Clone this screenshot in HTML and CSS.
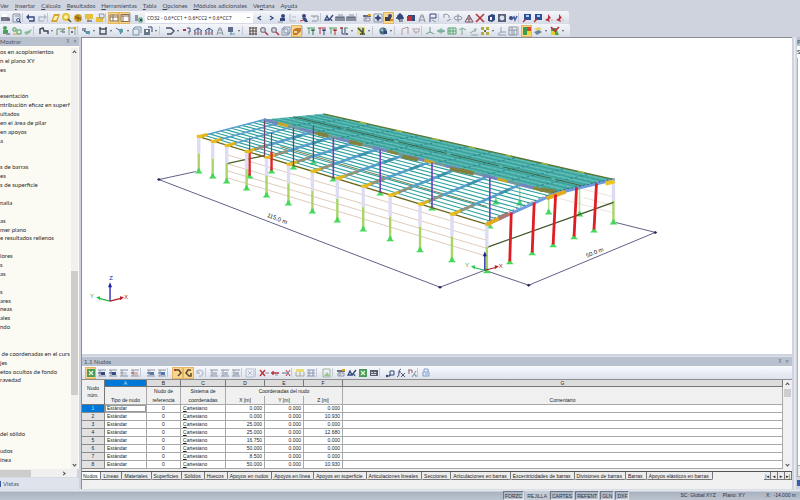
FILE: index.html
```html
<!DOCTYPE html>
<html lang="es">
<head>
<meta charset="utf-8">
<title>1.1 Nudos</title>
<link rel="stylesheet" href="styles.css">
</head>
<body>
<nav class="menu">
  <a href="#">Ver</a><a href="#"><u>I</u>nsertar</a><a href="#"><u>C</u>álculo</a><a href="#"><u>R</u>esultados</a><a href="#"><u>H</u>erramientas</a><a href="#"><u>T</u>abla</a><a href="#"><u>O</u>pciones</a><a href="#"><u>M</u>ódulos adicionales</a><a href="#">Ve<u>n</u>tana</a><a href="#">Ay<u>u</u>da</a>
</nav>
<div class="bars">
  <div class="toolbar">
    <div class="tools" data-icons="print preview | undo redo | note zoom ball bubble folder | *table *window | steps"></div>
    <select class="case" aria-label="Caso de carga"><option>CO32 - 0.6*CC1 + 0.6*CC2 + 0.6*CC7</option></select>
    <div class="tools" data-icons="prev next person axes2 person2 beam2 | glasses ruler ruler || sheet grid *cam gear redcube tower flag | rotate orbit tent cross cube frame birds | screen screen pin pin"></div>
  </div>
  <div class="toolbar">
    <div class="tools" data-icons="greenman boxes leaf || frame2 v beamg dots | member v cell v link v box3 disk v || shape v hook house house tower screen2 v || hash zoomr zoomr wire *solid | ax ay az axyz v check v || globe v || portal load | node surf mesh fork slope four v tri table2 | *color layers v heat v"></div>
  </div>
</div>
<main class="main">
  <aside class="side">
    <header class="caption"><span>Mostrar</span><span class="ctl">⊼ ✕</span></header>
    <div class="side-body">
      <ul class="tree" id="tree"></ul>
      <div class="vscroll"><i class="chev up"></i><span class="thumb"></span><i class="chev down"></i></div>
    </div>
    <div class="hscroll"><span class="thumb"></span><i class="chev right"></i></div>
    <a class="views" href="#"><i class="mark"></i>Vistas</a>
  </aside>
  <section class="center">
    <div class="view"><svg id="model" viewBox="82 38 710 317" role="img" aria-label="Modelo"></svg></div>
    <section class="sheet">
      <header class="caption"><span>1.1 Nudos</span><span class="ctl">⊼ ✕</span></header>
      <div class="tools sheet-tools" data-icons="*excel rowin rowmid rowoff rowred || colin colout || *curl *curl2 refresh | rowg rowg colg | xg | delx delm delr | hdr lines || pic | sheet glasses excel cal || steps2 fx perc | lock"></div>
      <div class="grid-wrap">
        <table class="grid">
          <colgroup><col class="c0"><col class="ca"><col class="cb"><col class="cc"><col class="cd"><col class="cd"><col class="cd"><col></colgroup>
          <thead>
            <tr class="letters"><th rowspan="3" class="num">Nudo<br>núm.</th><th class="on">A</th><th>B</th><th>C</th><th>D</th><th>E</th><th>F</th><th>G</th></tr>
            <tr class="h1"><th></th><th>Nudo de</th><th>Sistema de</th><th colspan="3">Coordenadas del nudo</th><th></th></tr>
            <tr class="h2"><th>Tipo de nudo</th><th>referencia</th><th>coordenadas</th><th>X [m]</th><th>Y [m]</th><th>Z [m]</th><th>Comentario</th></tr>
          </thead>
          <tbody id="rows"></tbody>
        </table>
        <div class="vscroll table-scroll"><i class="chev up"></i><span class="thumb"></span><i class="chev down"></i></div>
      </div>
      <div class="tabs">
        <button class="active">Nudos</button><button>Líneas</button><button>Materiales</button><button>Superficies</button><button>Sólidos</button><button>Huecos</button><button>Apoyos en nudos</button><button>Apoyos en línea</button><button>Apoyos en superficie</button><button>Articulaciones lineales</button><button>Secciones</button><button>Articulaciones en barras</button><button>Excentricidades de barras</button><button>Divisiones de barras</button><button>Barras</button><button>Apoyos elásticos en barras</button>
        <span class="pager"><button aria-label="Primera">|◂</button><button aria-label="Anterior">◂</button><button aria-label="Siguiente">▸</button><button aria-label="Última">▸|</button></span>
      </div>
    </section>
  </section>
  <aside class="right"><header class="caption">P</header><div class="right-top">S</div><div class="right-body"></div><div class="right-foot"></div><i class="mark"></i></aside>
</main>
<footer class="status">
  <button>FORZC</button><button class="flat">REJILLA</button><button>CARTES</button><button>REFENT</button><button>GLN</button><button>DXF</button>
  <span class="sc">SC: Global XYZ</span><span class="plane">Plano: XY</span><span class="coord">X:&nbsp; -14.000 m</span>
</footer>
<script src="script.js"></script>
</body>
</html>
```
FILE: styles.css
```css
* { box-sizing: border-box; }
body {
  margin: 0; height: 100vh; display: flex; flex-direction: column; overflow: hidden;
  background: #cfd3dd; color: #222; font: 6px/8px Lato, sans-serif;
}
button, select { font: inherit; color: inherit; border: 0; padding: 0; margin: 0; background: none; }
a { color: inherit; text-decoration: none; }
.menu { display: flex; gap: 6px; height: 11px; line-height: 11px; color: #444a58; }
.toolbar { display: flex; width: max-content; height: 13px; align-items: center; padding: 0 4px 0 0; background: linear-gradient(#f4f6fa, #e4e8f0 60%, #d6dbe6); border-radius: 0 2px 2px 0; }
.tools { display: flex; align-items: center; }
.tool { width: 11px; height: 12px; display: flex; align-items: center; justify-content: center; flex: none; }
.tool svg { width: 10px; height: 10px; display: block; }
.tool.lit { background: #fbd58c; box-shadow: inset 0 0 0 1px #e3b665; }
.sep { width: 3px; height: 9px; border-left: 1px solid #c3c8d4; flex: none; }
.sep.wide { width: 5px; margin-left: 0; }
.drop { width: 6px; display: flex; justify-content: center; }
.drop::after { content: ""; border: 1px solid transparent; border-top: 2px solid #555b6b; border-bottom: 0; }
.case { width: 108px; height: 10px; margin: 0 1px; padding-left: 2px; background: #fff; font: 5px/8px "Noto Sans", sans-serif; appearance: none; color: #222;
  background-image: linear-gradient(#8a93a8, #8a93a8); background-size: 3px 1px; background-repeat: no-repeat; background-position: 102px 4px; }
.main { flex: 1; min-height: 0; display: flex; }
.caption { height: 9px; line-height: 9px; display: flex; justify-content: space-between; background: #b9c0ce; color: #4b5363; flex: none; }
.ctl { padding-right: 2px; color: #6c7484; font-size: 5px; word-spacing: 2px; }

.side { width: 79px; flex: none; display: flex; flex-direction: column; }
.side-body { flex: 1; min-height: 0; display: flex; background: #fbfaf3; padding-top: 2px; }
.tree { list-style: none; margin: 0; padding: 0 0 4px; flex: 1; min-width: 0; display: flex; flex-direction: column; overflow: hidden; white-space: nowrap; color: #2b2b2b; }
.tree li { flex: 1; }
.vscroll { width: 8px; flex: none; margin-right: 2px; background: #f0f0f0; display: flex; flex-direction: column; align-items: center; }
.side .vscroll { width: 7px; margin-right: 1px; }
.vscroll .thumb { width: 7px; background: #cdcdcd; }
.side .vscroll .thumb { height: 124px; margin: 217px 0 auto; }
.chev { width: 3px; height: 3px; border: solid #444; border-width: 1px 0 0 1px; flex: none; }
.up { transform: rotate(45deg); margin-top: 3px; }
.down { transform: rotate(225deg); margin-bottom: 3px; }
.right.chev { transform: rotate(135deg); }
.hscroll { height: 9px; background: #f0f0f0; display: flex; align-items: center; justify-content: space-between; padding-right: 12px; margin-right: 2px; border-bottom: 1px solid #d8dbe2; }
.hscroll .thumb { width: 31px; height: 7px; background: #cdcdcd; }
.views { height: 11px; line-height: 11px; display: flex; gap: 2px; align-items: center; color: #4b5363; background: #dfe3ec; }
.mark { width: 1px; height: 6px; background: #3a5ba8; flex: none; }

.center { flex: 1; min-width: 0; margin-left: 2px; display: flex; flex-direction: column; border-left: 1px solid #888d98; }
.view { flex: 1; min-height: 0; background: #fff; border-top: 1px solid #888d98; display: flex; }
.view svg { flex: 1; min-width: 0; width: 100%; height: 100%; }
.sheet { margin-top: 2px; background: #f0f0f0; border-top: 1px solid #dde1e9; font: 5px/8px "Liberation Sans", sans-serif; }
.sheet .caption { padding-left: 2px; font: 6px/9px Lato, sans-serif; border-right: 1px solid #b9c0ce; }
.sheet-tools { height: 13px; padding-left: 3px; background: linear-gradient(#f8fafd, #dde2ec); }
.grid-wrap { display: flex; border-top: 1px solid #8e8e8e; }
.grid { flex: 1; min-width: 0; border-collapse: separate; border-spacing: 0; table-layout: fixed; font-size: 5px; line-height: 7px; color: #222; }
.c0 { width: 23px; } .ca { width: 42px; } .cb { width: 34px; } .cc { width: 45px; } .cd { width: 39px; }
.grid th, .grid td { padding: 0 2px; height: 8px; border: solid #a9a9a9; border-width: 0 1px 1px 0; font-weight: normal; white-space: nowrap; overflow: hidden; }
.grid .letters th { height: 7px; line-height: 6px; background: #dcdcdc; border-color: #777; }
.grid .letters .on, .grid .on { background: #0078d7; color: #bfe0ff; }
.grid .h1 th { height: 9px; border-bottom: 0; background: #f0f0f0; }
.grid .h2 th { height: 9px; background: #f0f0f0; }
.grid .letters .num { background: #f0f0f0; line-height: 7px; }
.grid tbody th { background: #e2e2e2; border-color: #8a8a8a; }
.grid tbody .on { background: #0078d7; }
.grid tbody td { background: #fff; }
.grid .mid { text-align: center; }
.grid .val { text-align: right; }
.grid .cur { box-shadow: inset 0 0 0 1px #999; }
.table-scroll { margin: 0 1px 0 0; }
.table-scroll .thumb { height: 8px; margin: 3px 0 auto; }
.tabs { margin-top: 2px; height: 18px; display: flex; align-items: flex-start; border-top: 1px solid #555; color: #222; }
.tabs button { height: 8px; line-height: 8px; padding: 0 3px 0 2px; border: solid #777; border-width: 0 1px 1px 0; border-radius: 0 0 2px 1px; background: #ececec; white-space: nowrap; }
.tabs .active { background: #fff; padding-left: 1px; }
.pager { margin-left: auto; display: flex; }
.pager button { width: 7px; padding: 0; font-family: "DejaVu Sans", sans-serif; border-radius: 0; }

.right:not(.chev) { width: 8px; padding-left: 3px; margin-left: 2px; margin-right: -2px; flex: none; display: flex; flex-direction: column; overflow: hidden; background: linear-gradient(90deg, #e9ecf2 1px, #cfd3dd 2px); }
.right-top { height: 12px; line-height: 12px; background: #f7f8fa; }
.right-body { flex: 1; background: #fff; border-left: 1px solid #aeb3be; }
.right-foot { height: 12px; background: #ececec; border: 1px solid #aaa; }
.right .mark { width: 4px; margin: 3px 0; }
.status { height: 11px; flex: none; display: flex; align-items: center; gap: 1px; padding: 0 4px 0 503px; background: linear-gradient(#e4e8ee 1px, #a9b2c0 2px, #bcc4d0); color: #2c3340; font: 5px/8px "Liberation Sans", sans-serif; white-space: nowrap; border-top: 1px solid #d9dde5; }
.status button { height: 9px; padding: 0 1px; border: 1px solid; border-color: #6f7888 #e3e7ed #e3e7ed #6f7888; }
.status .flat { border-color: transparent; background: #c6ccd6; }
.sc { margin-left: auto; }
.plane { margin: 0 20px 0 6px; }
```
FILE: script.js
```js
// Tool icons on a 10 x 10 grid: F fills a path, L strokes one.
const F = (c, d) => `<path fill="${c}" d="${d}"/>`;
const L = (c, d, w = 1) => `<path fill="none" stroke="${c}" stroke-width="${w}" d="${d}"/>`;
const C = (c, x, y, r) => `<circle cx="${x}" cy="${y}" r="${r}" fill="${c}"/>`;
const navy = '#34477c', gray = '#8c94a3', red = '#b8323c', green = '#49a25c', gold = '#d8a62c', teal = '#5a9aa8', pale = '#b4bccb';
const axis = (a, b) => L(a, 'M1 2H9M3 2V8') + L(b, 'M5 4H9M7 4V9') + F(b, 'M5 5l2-2 2 2z');
const row = (c, d) => L(gray, 'M1 2H9M1 8H9M3 2V8') + F(c, 'M4 4h4v3h-4z') + L(d, 'M1 5H4');
const house = c => L(navy, 'M1 5l4-3 4 3M2 5V9M8 5V9M5 3V9') + L(c, 'M1 7H9');
const icons = {
  print: F('#707a8e', 'M0 4h7l2 1v3H0z') + F('#fff', 'M1 1h5v3H1z') + F(red, 'M6 6h2v1H6z'),
  preview: F('#dfe5f2', 'M1 1h7v8H1z') + L(gray, 'M1 1h7v8H1zM3 3h4') + L(navy, 'M6 5.500a1.500 1.500 0 1 0 .1 0M7 8l2 2'),
  undo: L(navy, 'M3 8h5V4H2', 1.4) + F(navy, 'M0 4l3-3v6z'),
  redo: L(pale, 'M7 8H2V4h6', 1.4) + F(pale, 'M10 4L7 1v6z'),
  note: F(gold, 'M3 1h6L6 9H0z') + F('#fff5b8', 'M4 3h3L5 7H2z'),
  zoom: C('#e6c23c', 4, 4, 4) + C('#fff3a5', 4, 4, 2) + L('#6b5518', 'M6 6l3 3', 1.5),
  ball: C(gold, 5, 5, 4) + L('#7f5c16', 'M2 5h6M5 2v6M2 3l6 4'),
  bubble: F('#e4c138', 'M1 1h8v5H6L4 9 3 6H1z') + L(navy, 'M3 8h5'),
  folder: F('#e4c138', 'M1 4h7v5H1z') + L(gray, 'M4 1h5v4H5z'),
  table: F('#fff', 'M1 2h8v6H1z') + L('#856f50', 'M1 2h8v6H1zM4 2v6M1 4h8', 1),
  window: F('#fff', 'M1 1h8v8H1z') + L('#856f50', 'M1 1.500h8v7H1zM1 3h8M3 3v5'),
  steps: F(gray, 'M1 2h3v6H1z') + L(green, 'M5 5h3v4H5z') + C(navy, 7, 7, 1.3),
  steps2: L(navy, 'M1 8h4V3h4v4H4', 1) + C(navy, 2, 8, 1.2),
  prev: L(navy, 'M6 3L3 5l3 2', 1.3), next: L(navy, 'M4 3l3 2-3 2', 1.3),
  person: C(navy, 6, 3, 2) + F(navy, 'M3 5h5v3H3z') + L(gray, 'M1 9h5'),
  person2: C(navy, 5, 3, 2) + F(navy, 'M3 5h4l2 4H6z') + L(red, 'M1 8l4-1'),
  axes2: L(pale, 'M2 1v7h6M4 4h4'), beam2: L(gray, 'M1 3h7v5M2 8h5M4 3v2'),
  glasses: L(navy, 'M1 7l2-4 2 4zM5 7l4-5M6 5l2 3', 1.3),
  ruler: L('#4a5365', 'M1 8V4h8v4M3 4v4M5 4v4M7 4v4', 1.2) + L(gray, 'M3 2h5'),
  sheet: F('#6a6f77', 'M1 2h8v2H1z') + L(gray, 'M2 5h6v3H2zM4 4v4') + F(gold, 'M6 1h3v2H6z'),
  grid: L(gray, 'M1 1h8v8H1z') + L(navy, 'M5 2v6M2 5h6', 1.5) + C(navy, 5, 5, 2),
  cam: F('#3c3f4c', 'M1 4h6v4H1z') + C(navy, 6, 3, 2) + F('#c88925', 'M6 6h3v2H6z'),
  gear: C(navy, 5, 4, 3) + L(navy, 'M5 0v9M1 5h8', 1.3) + F(gray, 'M5 6h3v3H5z'),
  redcube: F(navy, 'M2 2h7v6H2z') + F(red, 'M1 3h5v5H1z'),
  tower: L(gray, 'M2 9l2-7h2l2 7M2 7h6M3 4h4'), flag: L(navy, 'M2 9V1h6v4H3') + L(gray, 'M4 7l4 2'),
  rotate: L(gray, 'M2 2a3 3 0 0 1 5 3M2 1v4M5 8l4-2'), orbit: L(gray, 'M5 1v8M1 5a4 2 0 1 0 8 0a4 2 0 1 0-8 0'),
  tent: L('#7e5360', 'M1 9l4-7 4 7zM5 2v7M3 6h4'), cross: L(red, 'M1 1l8 8M9 1L1 9', 1.6),
  cube: F(navy, 'M2 3l4-2 3 1v5L6 9 2 8z') + F('#fff', 'M4 4h2v3H4z'),
  frame: F('#59627a', 'M1 1h8v8H1z') + C('#dbe1ee', 5, 5, 2.4), birds: C(navy, 3, 5, 2) + L('#4861a6', 'M3 7l3-3 1 3 2-4', 1.6),
  screen: F('#28509c', 'M2 1h7v6H2z') + F('#b6cdf0', 'M4 2h3v2H4z') + L(red, 'M1 9l3-3', 1.5),
  pin: F(red, 'M4 1l3 4-2 1 1 3-5-2 3-2z') + L('#e0a0a4', 'M7 7h2'),
  greenman: C(green, 4, 2, 2) + F(green, 'M2 4h5v4H2z') + F(gray, 'M5 7h4v2H5z'),
  boxes: L(green, 'M1 2h3v3H1zM5 4h4v4H5z') + L(gold, 'M1 8h4'), leaf: F('#88bd9b', 'M1 6l4-1 4-2-2 4-4 2z'),
  frame2: L('#3d4656', 'M1 8V3l3-1 1 3h4v3', 1.4), beamg: L('#6f8b6d', 'M1 9V3h8L4 6') + L(navy, 'M6 6h3'),
  dots: L('#8aa37e', 'M2 9V2h6v7') + C(gold, 2, 2, 1.2) + C(gold, 8, 2, 1.2) + C(navy, 5, 6, 1),
  member: F(gray, 'M1 2h4v3H1z') + L(navy, 'M3 5l5 3') + F(teal, 'M5 5h4v3H5z'), cell: L('#4a5260', 'M2 3h6v5H2zM1 2h2M7 2h2', 1.4),
  link: L('#4668a0', 'M1 2l3 2 3-1v3L5 8') + C(teal, 6, 5, 2), box3: L('#7892a7', 'M1 3h6v6H1zM3 1h6v6M1 3l2-2'),
  disk: F('#6b7689', 'M1 3h6v6H1z') + L(navy, 'M5 1h4v5') + F('#fff', 'M3 4h2v2H3z'),
  shape: L('#48536c', 'M1 2h5l3 3-3 3H2', 1.4), hook: L(navy, 'M5 2h3v4H6') + F(red, 'M1 3h3v2H1z') + L(gray, 'M7 6v3'),
  house: house('#c28387'), screen2: F('#5d6c86', 'M2 1h5v5H2z') + L(teal, 'M4 8h5M5 6v3'),
  hash: L('#57463e', 'M1 2h8M1 5h8M1 8h8M2 1v8M5 1v8M8 1v8'), zoomr: C('#7c8193', 4, 4, 3) + C('#e1d5dc', 4, 4, 1.7) + L(red, 'M6 6l3 3', 1.5),
  wire: L('#8c95a9', 'M1 3h6v6H1zM3 1h6v6H3zM1 3l2-2M7 9l2-2'), solid: F('#c3792a', 'M1 4l3-2h5v3L5 9H1z') + F('#f3d09b', 'M2 5h3v2H2z'),
  ax: axis(green, '#3d6c52'), ay: axis(red, navy), az: axis(green, red), axyz: L(red, 'M1 2h3M7 8h2', 1.4) + L(navy, 'M3 2v6h5M6 2v5') + L(green, 'M5 2h4'),
  check: F('#dedc8c', 'M1 1h8v8H1z') + L('#3e4b3a', 'M2 2l5 5M7 2v5M4 8h5', 1.5),
  globe: C('#456b7d', 5, 5, 3.600) + C('#8fbec4', 4, 4, 1.5) + F(navy, 'M6 5h3v3H6z'), portal: L('#b49aa3', 'M2 9V3l6-2v7'), load: L('#b3a5ad', 'M1 3h8M3 3v3h5V3M5 6v2'),
  node: L('#6aa07f', 'M5 1v5M1 8l4-2 4 2'), surf: F('#93c7a2', 'M1 5l4-3 4 3-4 3z') + L('#6f95a5', 'M1 5h8'),
  mesh: L('#58a36e', 'M1 2h8v6H1zM3 2v6M6 2v6M1 5h8'), fork: L('#70aa80', 'M4 9V3M1 4l3-2 4 2'), slope: L('#8fa99d', 'M1 7l7-4M2 9h7M6 2v4'),
  four: F('#b2ad3e', 'M1 1h3v3H1zM6 1h3v3H6zM1 6h3v3H1zM6 6h3v3H6z') + L('#6a733e', 'M4 4l2 2M6 4L4 6'),
  tri: L('#90a0b8', 'M4 1v5h5M1 9h8M4 6L1 8'), table2: L(gray, 'M1 1h8v8H1zM1 4h8M4 1v8M6 4v5'),
  color: F('#3c9b50', 'M1 1h4v8H1z') + F('#d94432', 'M5 1h4v4H5z') + F('#e9d838', 'M5 5h4v4H5z'),
  layers: F('#e2d56e', 'M1 3l5-2 3 2-5 2z') + F('#6a86a2', 'M1 6l5-2 3 2-5 3z'),
  heat: F('#4aa54f', 'M1 2h5l3 7H1z') + F('#e3d22e', 'M1 5h4v4H1z') + L(red, 'M1 1l4 4 4-4', 1.7),
  excel: F('#4b9a58', 'M1 1h8v8H1z') + L('#e8f5df', 'M3 3l4 4M7 3L3 7', 1.2),
  rowin: row(navy, navy), rowmid: row('#334f85', '#334f85'), rowoff: row('#c9cfdb', gray), rowred: row('#d8b3b6', red),
  colin: row('#5277b0', navy), colout: row('#5277b0', '#5277b0'),
  curl: L('#5a4b2f', 'M2 2h4l2 3-3 3', 1.5) + F(red, 'M1 1h2v2H1z'), curl2: L('#5a4b2f', 'M7 2H4L2 5l3 3h2V5', 1.5),
  refresh: L(pale, 'M2 5a3 3 0 1 1 2 3M2 2v3h3', 1.3), rowg: row(pale, pale), colg: row('#a9b3c5', pale), xg: L(pale, 'M1 1h8v8H1zM3 3l4 4M7 3L3 7'),
  delx: L(red, 'M1 2l5 6M6 2L1 8', 1.4) + L(gray, 'M6 5h4'), delm: L(red, 'M1 5h8M3 3v4', 1.4) + L(gray, 'M5 7h3'), delr: L(red, 'M5 2l4 6M9 2L5 8', 1) + L(gray, 'M1 5h7', 1.4),
  hdr: F('#e9dc72', 'M1 1h8v3H1z') + L('#a8a99a', 'M1 4v4h8V4M5 4v4'), lines: L('#8a94b0', 'M1 2h8M1 5h8M1 8h8M3 2v6M7 2v6'),
  pic: L('#9fb09a', 'M1 1h7v8H1z') + F('#9cc38b', 'M2 8l3-4 3 4z'), cal: F('#59616e', 'M1 2h8v6H1z') + F('#d7dbe2', 'M2 4h2v1H2zM5 4h2v1H5zM2 6h5v1H2z'),
  fx: L('#4e5b77', 'M5 1q-2 0-2 4T1 9M2 4h3M5 5l4 4M9 5L5 9'), perc: L('#98606f', 'M1 2h4v3M2 2v4') + L('#7e8ba8', 'M9 3L5 9M7 7h2v2'),
  lock: L('#7f9fd0', 'M3 4V1h4v3M2 4h6v4H2zM4 6h3'),
};
document.querySelectorAll('.tools').forEach(box => {
  box.innerHTML = box.dataset.icons.split(' ').map(name => {
    if (name === '|') return '<i class="sep"></i>';
    if (name === '||') return '<i class="sep wide"></i>';
    if (name === 'v') return '<i class="drop"></i>';
    const lit = name[0] === '*', key = lit ? name.slice(1) : name;
    return `<button class="tool${lit ? ' lit' : ''}" aria-label="${key}"><svg viewBox="0 0 10 10">${icons[key]}</svg></button>`;
  }).join('');
});

document.getElementById('tree').innerHTML = ('os en acoplamientos/n el plano XY/es///esentación/ntribución eficaz en superf/ultados/en el área de pilar/en apoyos/a///s de barras/es/s de superficie//nalla//as/mer plano/e resultados rellenos//lores/s/as//s/ares/neas/ales/ndo///' +
  '&nbsp;de coordenadas en el curs/jes/etos ocultos de fondo/ravedad//////del sólido//udos/ínea').split('/').map(t => `<li>${t}</li>`).join('');

const nodes = [['0.000', '0.000'], ['0.000', '10.930'], ['25.000', '0.000'], ['25.000', '12.680'], ['16.750', '0.000'], ['50.000', '0.000'], ['8.500', '0.000'], ['50.000', '10.930']];
document.getElementById('rows').innerHTML = nodes.map(([x, z], i) =>
  `<tr><th class="${i ? '' : 'on'}">${i + 1}</th><td class="${i ? '' : 'cur'}">Estándar</td><td class="mid">0</td><td><u>C</u>artesiano</td><td class="val">${x}</td><td class="val">0.000</td><td class="val">${z}</td><td></td></tr>`).join('');

// Model of the hall: near eave, ridge and far eave run from left to right.
const mix = (a, b, t) => [a[0] + (b[0] - a[0]) * t, a[1] + (b[1] - a[1]) * t];
const near = [[198, 137], [487, 225]], ridge = [[263, 120], [556, 194]], far = [[323, 114], [615, 180]];
const out = [];
const line = (a, b, c, w = 1, extra = '') => out.push(`<line x1="${a[0]}" y1="${a[1]}" x2="${b[0]}" y2="${b[1]}" stroke="${c}" stroke-width="${w}" ${extra}/>`);
const poly = (p, c, o = 1) => out.push(`<polygon points="${p.join(' ')}" fill="${c}" opacity="${o}"/>`);
const foot = (x, y) => poly([[x - 1, y - 4], [x + 1, y - 4], [x + 2, y - 1], [x + 4, y + 1], [x - 4, y + 1], [x - 2, y - 1]], '#45d95a');
const label = (x, y, t, c, r = 0, s = 6) => out.push(`<text x="${x}" y="${y}" fill="${c}" font-size="${s}" font-family="Liberation Sans, sans-serif" text-anchor="middle" transform="rotate(${r} ${x} ${y})">${t}</text>`);
const column = (x, top, base, w = 3.4) => {
  const m = top + (base - top) * 0.47;
  line([x, top], [x, m], '#dcdcf4', w); line([x, m], [x, base], '#a9d568', w - 1); foot(x, base);
};
const cols = [[198, 137, 173], [212, 142, 178], [226, 146, 183], [246, 152, 190], [266, 158, 197], [288, 165, 205], [312, 172, 213], [337, 179, 222], [363, 187, 231], [390, 196, 241], [420, 205, 252], [452, 215, 262], [487, 225, 273]];

[[158, 180, 195, 172], [158, 180, 440, 288], [440, 288, 485, 271], [485, 271, 529, 286], [529, 286, 656, 233], [656, 233, 616, 223]].forEach(d => line([d[0], d[1]], [d[2], d[3]], '#39396b', 0.8));
[[158, 180], [440, 288], [529, 286], [656, 233]].forEach(p => poly([[p[0] - 2, p[1]], [p[0], p[1] - 1.500], [p[0] + 2, p[1]], [p[0], p[1] + 1.500]], '#26265c'));
label(276, 221, '115.0 m', '#222', 21); label(596, 255, '50.0 m', '#222', -22);

[[155, 232], [164, 241], [171, 249], [178, 257]].forEach(([a, b], i) => line([226, a], [487, b], '#c9a98d', 0.6));
[[496, 197, 204], [520, 183, 205], [549, 187, 214], [580, 188, 216]].forEach(([x, a, b]) => { line([x, a], [x, b], '#b9dc8c', 1.5); foot(x, b); });
[[584, 190, 613, 197], [584, 198, 613, 206], [560, 199, 613, 213]].forEach(d => line([d[0], d[1]], [d[2], d[3]], '#d8c5b3', 0.5));
column(614, 181, 224);
line([226, 164], [264, 156], '#4e5f28', 1.2); line([487, 248], [614, 203], '#3f5226', 1.3);
[[249, 138, 178], [271, 133, 173]].forEach(([x, a, b]) => foot(x, b));
[[293, 169], [313, 164], [333, 181], [380, 195], [432, 210], [490, 228]].forEach(([x, y]) => foot(x, y));
line([280, 147], [487, 207], '#6d6b30', 0.9);

// Far slope, close purlins
poly([ridge[0], far[0], far[1], ridge[1]], '#38aaa2', 0.9);
for (let i = 0; i < 14; i++) line(mix(ridge[0], far[0], i / 14), mix(ridge[1], far[1], i / 14), i % 2 ? '#7accc6' : '#2d928e', 0.6);
for (let i = 1; i < 48; i++) line(mix(...ridge, i / 48), mix(...far, i / 48), i % 4 ? '#2f9690' : '#247a86', i % 4 ? 0.3 : 0.8, 'stroke-dasharray="3 2"');
line(mix(ridge[0], far[0], 0.5), mix(ridge[1], far[1], 0.5), '#3c6440', 1, 'stroke-dasharray="50 4"');
line(...far, '#5b7431', 1.3);
for (let i = 1; i < 8; i++) { const p = mix(...far, i / 8); line(p, [p[0] + 6, p[1] + 1.500], '#a7ba3b', 1.5); }

// Near slope, open purlins
for (let i = 1; i < 12; i++) line(mix(near[0], ridge[0], i / 12), mix(near[1], ridge[1], i / 12), '#2ba09f', 1.1);
cols.forEach(([x, top], i) => {
  const t = (x - 198) / 289, a = [x, top], b = mix(...ridge, t);
  if (i === 12) return;
  line(a, b, '#559fcb', i > 2 ? 2.6 : 1.6);
  line(a, mix(a, b, 0.13), '#dfb41c', 3);
  if (i > 2) { line(mix(a, b, 0.13), mix(a, b, 0.32), '#94947a', 2.8); line(mix(a, b, 0.7), mix(a, b, 0.85), '#3c93a9', 2.6); }
});
line(...ridge, '#6e9b9d', 3);
for (let i = 0; i < 8; i++) {
  const a = mix(...ridge, i / 8), b = mix(...ridge, i / 8 + 0.05), c = mix(...ridge, i / 8 + 0.085);
  line(a, b, '#7088bd', 3); line(b, c, i % 2 ? '#858838' : '#c7a72c', 3);
}
[[318, 134, 328, 136], [349, 142, 362, 145], [402, 157, 418, 160], [450, 169, 474, 174], [540, 190, 556, 192]].forEach(d => line([d[0], d[1]], [d[2], d[3]], '#81813e', 4));
line(...near, '#6c6818', 1.3);
[[249, 138, 178], [271, 133, 173]].forEach(([x, a, b]) => { line([x, a], [x, 152], '#96404c', 1.2); line([x, 152], [x, b - 2], '#e02429', 2.4); });
[[264, 121, 158], [293, 128, 166], [313, 126, 161]].forEach(([x, a, b]) => line([x, a], [x, b], '#70436f', 1.3));
[[333, 138, 179], [380, 150, 193], [432, 163, 208], [490, 178, 222]].forEach(([x, a, b]) => line([x, a], [x, b], '#713fb5', 1.6));
cols.forEach(c => column(...c));
cols.forEach(([x, y]) => line([x - 2, y - 0.5], [x + 4, y], '#e8bd20', 3));

// Right gable
line(near[1], ridge[1], '#6f9bde', 3); line(ridge[1], far[1], '#6f9bde', 3);
[[487, 225, 499, 219, '#e5aa1c'], [499, 219, 509, 214, '#b3766c'], [547, 199, 566, 192, '#e5aa1c'], [606, 184, 615, 182, '#efc51c']].forEach(d => line([d[0], d[1]], [d[2], d[3]], d[4], 4));
line([487, 222], [556, 192], '#2f6a70', 0.7, 'stroke-dasharray="2 2"'); line([556, 192], [615, 179], '#2f6a70', 1, 'stroke-dasharray="2 2"');
[[511.5, 213, 510, 264], [534.5, 203, 532.5, 255], [556, 195, 553.5, 247], [577, 188, 574.5, 239], [597, 184, 594.5, 232]].forEach(([a, b, c, d]) => { foot(c, d); line([a, b], [c, d - 2], '#e11d24', 2.8); });

// Axis triads
const triad = (x, y, h, s) => {
  line([x, y], [x, y - h], '#1c1ca8', 1.3); poly([[x, y - h - 3], [x - 2, y - h + 2], [x + 2, y - h + 2]], '#1c1ca8');
  line([x, y], [x - s, y - 3], '#28b34a', 1.2); poly([[x - s - 2, y - 4], [x - s + 2, y - 5], [x - s + 2, y - 1]], '#28c34a');
  line([x, y], [x + s, y - 3], '#b01c24', 1.2); poly([[x + s + 2, y - 4], [x + s - 2, y - 5], [x + s - 2, y - 1]], '#c01c24');
  label(x - s - 6, y - 3, 'Y', '#28a34a'); label(x + s + 4, y - 2, 'X', '#c01c24');
};
triad(109, 302, 16, 12); label(110, 281, 'Z', '#1c1ca8');
triad(485, 271, 16, 12);
document.getElementById('model').innerHTML = out.join('');
```
